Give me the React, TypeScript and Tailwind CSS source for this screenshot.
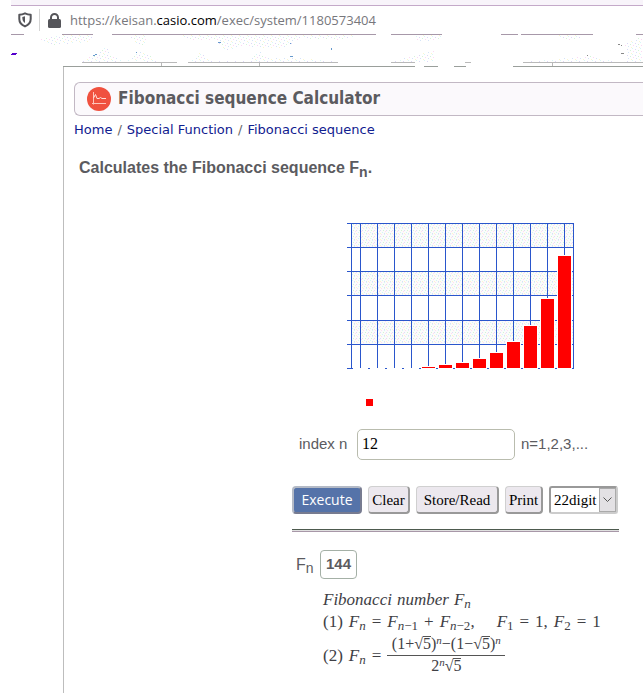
import React from "react";

const verticals = [351, 360, 377, 394, 411, 428, 445, 462, 479, 496, 513, 530, 547, 564, 573];
const horizontals = [223, 247, 271, 295, 320, 344, 368];
const bars = [
  { x: 422, top: 367 },
  { x: 439, top: 365 },
  { x: 456, top: 363 },
  { x: 473, top: 359 },
  { x: 490, top: 353 },
  { x: 507, top: 342 },
  { x: 524, top: 326 },
  { x: 541, top: 299 },
  { x: 558, top: 256 },
];

function Chart() {
  return (
    <svg className="block" width="228" height="184" viewBox="347 223 228 184" shapeRendering="crispEdges" role="img" aria-label="Fibonacci bar chart">
      <defs>
        <pattern id="speckle" width="6" height="6" patternUnits="userSpaceOnUse">
          <rect width="6" height="6" fill="#fbfcfb" />
          <rect x="0" y="0" width="1" height="1" fill="#d8f6f6" />
          <rect x="3" y="0" width="1" height="1" fill="#ffdcf4" />
          <rect x="5" y="2" width="1" height="1" fill="#d4f4d4" />
          <rect x="2" y="2" width="1" height="1" fill="#e0dcf8" />
          <rect x="1" y="3" width="1" height="1" fill="#ffdcf0" />
          <rect x="4" y="4" width="1" height="1" fill="#d4f6f4" />
          <rect x="2" y="5" width="1" height="1" fill="#fbf8cc" />
          <rect x="0" y="5" width="1" height="1" fill="#dcdcf6" />
        </pattern>
      </defs>
      {[223, 271, 320].map((y) => (
        <rect key={y} x="352" y={y} width="221" height="24" fill="url(#speckle)" />
      ))}
      {verticals.map((x) => (
        <rect key={x} x={x} y="223" width="1" height={x === 351 || x === 573 ? 146 : 145} fill="#2a56cc" />
      ))}
      {horizontals.map((y) => (
        <rect key={y} x="347" y={y} width="227" height="1" fill="#2a56cc" />
      ))}
      {[354, 371, 388, 405].map((x) => (
        <rect key={x} x={x - 1} y="368" width="15" height="1" fill="#fff" />
      ))}
      {bars.map((b) => (
        <g key={b.x}>
          <rect x={b.x - 1} y={b.top - 1} width="15" height={370 - b.top} fill="#fff" />
          <rect x={b.x} y={b.top} width="13" height={368 - b.top} fill="#ff0000" />
        </g>
      ))}
      <rect x="366" y="399" width="7" height="7" fill="#ff0000" />
    </svg>
  );
}

function NavRemnants() {
  return (
    <svg className="block" width="643" height="33" viewBox="0 34 643 33" shapeRendering="crispEdges" aria-hidden="true">
      <defs>
        <pattern id="grain" width="8" height="6" patternUnits="userSpaceOnUse">
          <rect x="0" y="0" width="1" height="1" fill="#d8f6f8" />
          <rect x="3" y="1" width="1" height="1" fill="#dcd8f8" />
          <rect x="6" y="2" width="1" height="1" fill="#d4f4d8" />
          <rect x="1" y="3" width="1" height="1" fill="#fcd8f4" />
          <rect x="4" y="4" width="1" height="1" fill="#d4e4f8" />
          <rect x="7" y="5" width="1" height="1" fill="#fbf6d0" />
        </pattern>
      </defs>
      <g fill="url(#grain)">
        <path d="M38 39L62 35H92V42L50 45ZM130 35H148L145 46L134 42ZM176 35H358L340 40L300 38L286 48L270 48L240 46L226 52L216 40L190 40ZM416 35H441V40L418 41ZM558 35H584L576 40H562ZM82 62L108 46L110 55L124 62ZM126 61L140 52L164 62ZM190 62L201 52L210 61H248L259 51L268 58H300L338 62ZM392 62L434 50V62ZM524 62L590 56L618 62ZM625 44L642 36V62H627Z" />
      </g>
      <g fill="#a798a9">
        <rect x="11" y="34" width="13" height="1" />
        <rect x="62" y="34" width="31" height="1" />
        <rect x="112" y="34" width="264" height="1" />
        <rect x="391" y="34" width="51" height="1" />
        <rect x="501" y="34" width="17" height="1" />
        <rect x="521" y="34" width="72" height="1" />
        <rect x="636" y="34" width="7" height="1" />
      </g>
      <g fill="#b9b9b9">
        <rect x="82" y="62" width="95" height="1" />
        <rect x="188" y="62" width="150" height="1" />
        <rect x="391" y="62" width="24" height="1" />
        <rect x="465" y="62" width="6" height="1" />
        <rect x="523" y="62" width="120" height="1" />
        <rect x="161" y="63" width="1" height="3" />
        <rect x="259" y="63" width="1" height="3" />
        <rect x="552" y="63" width="1" height="3" />
      </g>
      <g fill="#9a9f9b">
        <rect x="63" y="66" width="352" height="1" />
        <rect x="424" y="66" width="14" height="1" />
        <rect x="454" y="66" width="12" height="1" />
        <rect x="513" y="66" width="130" height="1" />
      </g>
      <rect x="12" y="53" width="5" height="1" fill="#5500cc" />
      <rect x="11" y="54" width="5" height="1" fill="#5500cc" />
      <g fill="#6699cc">
        <rect x="93" y="55" width="2" height="1" />
        <rect x="95" y="54" width="2" height="1" />
        <rect x="136" y="52" width="1" height="1" />
        <rect x="218" y="42" width="3" height="1" />
        <rect x="290" y="43" width="1" height="1" />
        <rect x="290" y="56" width="3" height="1" />
        <rect x="331" y="48" width="1" height="2" />
      </g>
      <g fill="#888">
        <rect x="618" y="44" width="2" height="1" />
        <rect x="621" y="45" width="1" height="1" />
        <rect x="621" y="53" width="3" height="1" />
        <rect x="587" y="55" width="1" height="1" />
      </g>
    </svg>
  );
}

function Root5() {
  return (
    <span className="inline-flex">
      <span>√</span>
      <span className="mt-0.5 border-t border-[#555] leading-[14px]">5</span>
    </span>
  );
}

const F = ({ n }: { n: React.ReactNode }) => (
  <span>
    <i>F</i>
    <sub className="text-[13px]">{n}</sub>
  </span>
);

const plainButton =
  "h-7 shrink-0 rounded border border-[#d0d0d0] border-r-2 border-b-2 border-r-[#999] border-b-[#999] bg-[#ece8ee] px-0 font-['Liberation_Serif',serif] text-[15px] leading-6 text-black";

export default function App() {
  return (
    <div className="flex min-h-screen flex-col overflow-x-hidden bg-white font-['Liberation_Sans',sans-serif] text-[#5b5b60]">
      <header>
        <div className="ml-[11px] h-1.5 border-b border-[#c4a9c9] bg-[#f8f4fa]" />
        <div className="flex h-7 items-center pl-[18px]">
          <svg width="14" height="16" viewBox="0 0 14 16" fill="none" stroke="#55555a" strokeWidth="2">
            <path d="M7 1.3C5 2.2 3 2.6 1.3 2.7V7C1.3 10.5 3.6 13 7 14.4C10.4 13 12.7 10.5 12.7 7V2.7C11 2.6 9 2.2 7 1.3Z" strokeLinejoin="round" />
            <path d="M7 4.3V11C5 9.8 4.3 8 4.3 5Z" fill="#55555a" stroke="none" />
          </svg>
          <span className="ml-[7px] h-[22px] w-px bg-[#d4d4d4]" />
          <svg className="ml-2" width="13" height="15" viewBox="0 0 13 15">
            <path d="M3 7V4.5A3.5 3.5 0 0 1 10 4.5V7" fill="none" stroke="#55555a" strokeWidth="2" />
            <rect y="6" width="13" height="9" rx="1.5" fill="#55555a" />
          </svg>
          <span className="ml-[9px] font-['Open_Sans',sans-serif] text-[13px] leading-5 whitespace-nowrap text-[#77777c]">
            https://keisan.<span className="text-black">casio.com</span>/exec/system/1180573404
          </span>
        </div>
        <NavRemnants />
      </header>

      <main className="ml-[63px] flex-1 border-l border-[#bdbdbd] pt-[15px] pb-3">
        <div className="ml-2.5 flex h-[34px] items-center rounded-l-md border border-r-0 border-[#c2b8c4] bg-[#fbf9fc] pl-3">
          <svg width="24" height="24" viewBox="0 0 24 24" fill="none">
            <circle cx="12" cy="12" r="12" fill="#f0513f" />
            <path d="M6.500 5V17.500M5 16.500H19" stroke="#ffc4ba" />
            <path d="M6.500 11L8.500 7.500L10 11.500H12L13.500 10.500L15 11.500H19" stroke="#ffe0da" />
          </svg>
          <h1 className="ml-[7px] font-['DejaVu_Sans_Condensed','DejaVu_Sans',sans-serif] text-[17px] font-bold whitespace-nowrap">Fibonacci sequence Calculator</h1>
        </div>
        <nav className="mt-1 ml-2.5 flex gap-[5px] font-['DejaVu_Sans',sans-serif] text-[13px] leading-5 whitespace-nowrap text-[#10208f]">
          <a href="#home">Home</a>
          <span className="text-[#666]">/</span>
          <a href="#special">Special Function</a>
          <span className="text-[#666]">/</span>
          <a href="#fibonacci">Fibonacci sequence</a>
        </nav>
        <h2 className="mt-4 ml-[15px] h-6 text-[16px] leading-6 font-bold">
          Calculates the Fibonacci sequence F<sub className="text-[14px]">n</sub>.
        </h2>

        <div className="mt-[43px] ml-[228px] w-[327px]">
          <div className="pl-[55px]">
            <Chart />
          </div>
          <div className="mt-[21px] flex h-8 items-center pl-[7px] text-[15px]">
            <label htmlFor="index" className="w-[58px]">index n</label>
            <input
              id="index"
              defaultValue="12"
              className="h-[31px] w-[158px] rounded-[5px] border border-[#b9bcae] bg-white px-1 font-['Liberation_Serif',serif] text-[16px] text-black"
            />
            <span className="ml-1.5">n=1,2,3,...</span>
          </div>
          <div className="mt-[26px] flex gap-1.5 whitespace-nowrap">
            <button className="h-7 w-[70px] shrink-0 rounded border-2 border-[#b4bac6] border-r-[#777b90] border-b-[#777b90] bg-[#5573a9] font-['Open_Sans',sans-serif] text-[14px] leading-5 text-white">
              Execute
            </button>
            <button className={`${plainButton} w-[42px]`}>Clear</button>
            <button className={`${plainButton} w-[83px]`}>Store/Read</button>
            <button className={`${plainButton} w-[38px]`}>Print</button>
            <div className="relative h-7 w-[69px] shrink-0">
              <select
                aria-label="Digits"
                className="h-7 w-full appearance-none rounded-[3px] border-2 border-[#999] border-r-[#ccc] border-b-[#ccc] bg-white pl-[3px] font-['Liberation_Serif',serif] text-[15px] text-black"
              >
                <option>22digit</option>
              </select>
              <span className="pointer-events-none absolute top-0.5 right-0.5 flex h-6 w-[17px] items-center justify-center border border-[#aaa] bg-[#e3e1e4]">
                <svg width="9" height="6" viewBox="0 0 9 6" fill="none" stroke="#555">
                  <path d="M.5 .5L4.500 4.500L8.500 .5" />
                </svg>
              </span>
            </div>
          </div>
          <hr className="mt-[15px] h-[3px] border-t border-b border-t-[#4d5a4e] border-b-[#a898a8] bg-[#e0e0e0]" />

          <div className="mt-[18px] flex h-[29px] items-center pl-1">
            <span className="w-6 text-[16px] leading-6">
              F<sub className="text-[14px]">n</sub>
            </span>
            <output className="flex h-[29px] w-[37px] items-center justify-center rounded border border-[#a4b0a6] text-[15px] font-bold">144</output>
          </div>

          <div className="mt-2.5 ml-[31px] font-['Liberation_Serif',serif] text-[17px] leading-[22px] whitespace-nowrap text-[#404045]">
            <p className="flex h-[22px] gap-[5px]">
              <i>Fibonacci</i>
              <i>number</i>
              <F n={<i>n</i>} />
            </p>
            <p className="flex h-[22px] gap-1.5">
              <span>(1)</span>
              <F n={<i>n</i>} />
              <span>=</span>
              <F n={<><i>n</i>−1</>} />
              <span>+</span>
              <span><F n={<><i>n</i>−2</>} />,</span>
              <span className="ml-4"><F n="1" /></span>
              <span>=</span>
              <span>1,</span>
              <F n="2" />
              <span>=</span>
              <span>1</span>
            </p>
            <div className="flex h-[46px] items-center gap-1.5">
              <span>(2)</span>
              <F n={<i>n</i>} />
              <span>=</span>
              <span className="flex w-[118px] flex-col items-center text-[16px] leading-5">
                <span className="h-[22px] w-full border-b border-[#555] text-center">
                  (1+<Root5 />)<sup className="text-[11px]"><i>n</i></sup>−(1−<Root5 />)<sup className="text-[11px]"><i>n</i></sup>
                </span>
                <span className="h-[22px]">
                  2<sup className="text-[11px]"><i>n</i></sup><Root5 />
                </span>
              </span>
            </div>
          </div>
        </div>
      </main>
    </div>
  );
}
